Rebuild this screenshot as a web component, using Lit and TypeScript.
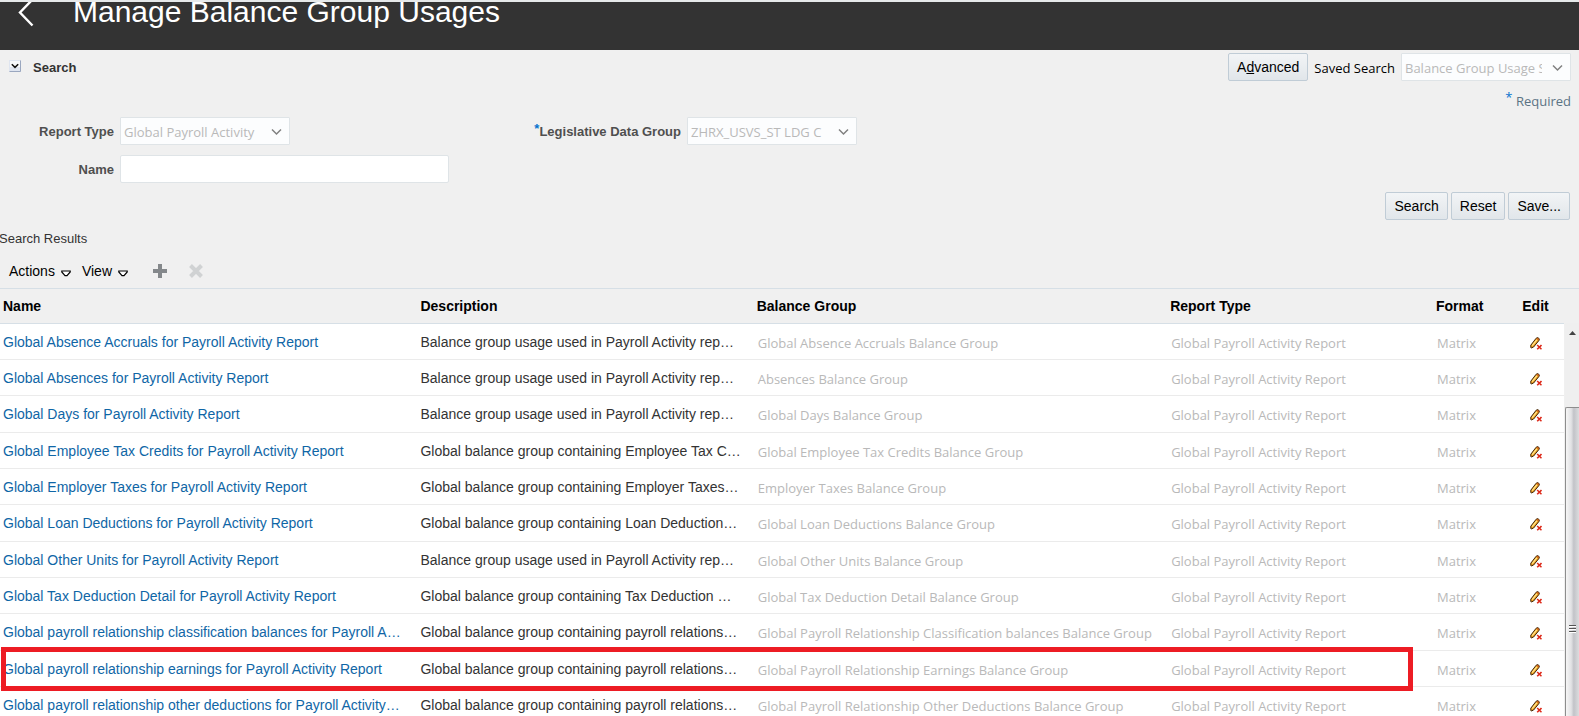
import { LitElement, html, css, svg, nothing } from "lit";
import { customElement, property } from "lit/decorators.js";

interface Usage {
  name: string;
  description: string;
  group: string;
  marked?: boolean;
}

const USAGES: Usage[] = [
  {
    name: "Global Absence Accruals for Payroll Activity Report",
    description: "Balance group usage used in Payroll Activity rep…",
    group: "Global Absence Accruals Balance Group",
  },
  {
    name: "Global Absences for Payroll Activity Report",
    description: "Balance group usage used in Payroll Activity rep…",
    group: "Absences Balance Group",
  },
  {
    name: "Global Days for Payroll Activity Report",
    description: "Balance group usage used in Payroll Activity rep…",
    group: "Global Days Balance Group",
  },
  {
    name: "Global Employee Tax Credits for Payroll Activity Report",
    description: "Global balance group containing Employee Tax C…",
    group: "Global Employee Tax Credits Balance Group",
  },
  {
    name: "Global Employer Taxes for Payroll Activity Report",
    description: "Global balance group containing Employer Taxes…",
    group: "Employer Taxes Balance Group",
  },
  {
    name: "Global Loan Deductions for Payroll Activity Report",
    description: "Global balance group containing Loan Deduction…",
    group: "Global Loan Deductions Balance Group",
  },
  {
    name: "Global Other Units for Payroll Activity Report",
    description: "Balance group usage used in Payroll Activity rep…",
    group: "Global Other Units Balance Group",
  },
  {
    name: "Global Tax Deduction Detail for Payroll Activity Report",
    description: "Global balance group containing Tax Deduction …",
    group: "Global Tax Deduction Detail Balance Group",
  },
  {
    name: "Global payroll relationship classification balances for Payroll A…",
    description: "Global balance group containing payroll relations…",
    group: "Global Payroll Relationship Classification balances Balance Group",
  },
  {
    name: "Global payroll relationship earnings for Payroll Activity Report",
    description: "Global balance group containing payroll relations…",
    group: "Global Payroll Relationship Earnings Balance Group",
    marked: true,
  },
  {
    name: "Global payroll relationship other deductions for Payroll Activity…",
    description: "Global balance group containing payroll relations…",
    group: "Global Payroll Relationship Other Deductions Balance Group",
  },
];

const pencil = html`<svg width="12" height="13" viewBox="0 0 12 13" aria-hidden="true">
  ${svg`
    <path d="M.8 10.6V8.2L6.2 1.2 7.6.5 9.3 1.8 9 3.4 3.6 10 1.6 10.9Z" fill="#f0a020" stroke="#3d2408" stroke-width="1"/>
    <path d="M2.2 8.6 6.8 2.8" stroke="#ffe890" stroke-width="1.2"/>
    <path d="M6.6 1.8 7.7.9 9 2 8.4 3.2Z" fill="#c8541c"/>
    <path d="m7.2 8 4.3 4.3m0-4.3-4.3 4.3" stroke="#dd2a1a" stroke-width="1.6"/>`}
</svg>`;

@customElement("choice-list")
export class ChoiceList extends LitElement {
  @property() label = "";
  @property() value = "";
  @property({ type: Boolean }) required = false;
  @property({ type: Boolean }) plain = false;

  static styles = css`
    :host {
      display: block;
    }
    .field {
      display: flex;
      align-items: center;
      gap: 6px;
    }
    .label {
      flex: 1;
      padding-top: 2px;
      text-align: right;
      white-space: nowrap;
      font: bold 13px/20px "Liberation Sans", Arial, sans-serif;
      color: #4f4f4f;
    }
    .label.plain {
      font: 13px/20px "Open Sans", "Noto Sans", sans-serif;
      color: #000;
    }
    .star {
      color: #0572ce;
      vertical-align: 3px;
      line-height: 1;
    }
    .box {
      display: grid;
      align-items: center;
      width: 170px;
    }
    .select,
    .chevron {
      grid-area: 1 / 1;
    }
    .select {
      appearance: none;
      box-sizing: border-box;
      width: 100%;
      height: 28px;
      margin: 0;
      padding: 2px 28px 0 3px;
      border: 1px solid #dfe4e7;
      border-radius: 1px;
      background: #fcfdfe;
      color: #b9b9b9;
      font: 13px/20px "Open Sans", "Noto Sans", sans-serif;
    }
    .chevron {
      justify-self: end;
      margin: 1px 8px 0 0;
      pointer-events: none;
    }
  `;

  render() {
    return html`<div class="field">
      <label class="label ${this.plain ? "plain" : ""}" for="choice"
        >${this.required ? html`<span class="star">*</span>` : nothing}${this.label}</label
      >
      <span class="box">
        <select class="select" id="choice">
          <option>${this.value}</option>
        </select>
        <svg class="chevron" width="11" height="8" viewBox="0 0 11 8" aria-hidden="true">
          <path d="M1 1.5 5.5 6 10 1.5" fill="none" stroke="#808080" stroke-width="1.5" />
        </svg>
      </span>
    </div>`;
  }
}

@customElement("app-root")
export class AppRoot extends LitElement {
  static styles = css`
    :host {
      display: flex;
      flex-direction: column;
      height: 100vh;
      overflow: hidden;
      background: #f0f0f0;
      color: #333;
      font: 14px/20px "Liberation Sans", Arial, sans-serif;
    }
    .banner {
      display: flex;
      flex: none;
      align-items: flex-start;
      gap: 39px;
      height: 48px;
      padding-left: 18px;
      border-top: 2px solid #e6e9ea;
      background: #333;
      color: #fff;
      overflow: hidden;
    }
    .back {
      display: flex;
      margin: 0;
      padding: 0;
      border: 0;
      background: none;
    }
    .title {
      margin: 0;
      font-size: 30px;
      font-weight: normal;
      line-height: 20px;
      white-space: nowrap;
    }
    .bar {
      display: flex;
      align-items: center;
      justify-content: space-between;
      padding: 3px 8px 0 9px;
    }
    .heading {
      display: flex;
      align-items: center;
      gap: 12px;
      margin: 0;
      padding-top: 2px;
      font-size: 13px;
    }
    .toggle {
      display: flex;
      margin: 0 0 4px;
      padding: 0;
      border: 0;
      background: none;
    }
    .group {
      display: flex;
      align-items: center;
      gap: 6px;
    }
    .button {
      box-sizing: border-box;
      height: 28px;
      margin: 0;
      padding: 0 8px;
      border: 1px solid #c0ccd6;
      border-radius: 2px;
      background: linear-gradient(#f2f4f6, #e1e6ea);
      color: #000;
      font: 14px/20px "Liberation Sans", Arial, sans-serif;
      white-space: nowrap;
    }
    .required {
      margin: 0;
      padding: 10px 8px 0;
      text-align: right;
      font: 13px/20px "Open Sans", "Noto Sans", sans-serif;
      color: #5b7384;
    }
    .star {
      color: #0572ce;
      vertical-align: 4px;
      line-height: 1;
    }
    .form {
      display: grid;
      grid-template-columns: 290px 567px;
      row-gap: 10px;
      padding-top: 6px;
    }
    .text-field {
      display: grid;
      grid-column: 1 / 3;
      grid-template-columns: 114px 329px;
      align-items: center;
      gap: 6px;
    }
    .text-label {
      padding-top: 2px;
      text-align: right;
      font-weight: bold;
      font-size: 13px;
      color: #4f4f4f;
    }
    .text-input {
      box-sizing: border-box;
      width: 329px;
      height: 28px;
      margin: 0;
      padding: 0 4px;
      border: 1px solid #dfe4e7;
      border-radius: 2px;
      background: #fff;
      font: 14px/20px "Liberation Sans", Arial, sans-serif;
    }
    .commands {
      display: flex;
      justify-content: flex-end;
      gap: 3px;
      padding: 9px 9px 0;
    }
    .results {
      margin: 0 0 0 -1px;
      padding-top: 9px;
      font-size: 13px;
      font-weight: normal;
    }
    .toolbar {
      display: flex;
      align-items: center;
      padding: 12px 9px 7px;
    }
    .menu,
    .tool {
      display: flex;
      align-items: center;
      margin: 0 11px 0 0;
      padding: 0;
      border: 0;
      background: none;
      color: #000;
      font: 14px/20px "Liberation Sans", Arial, sans-serif;
    }
    .menu {
      gap: 6px;
    }
    .menu svg {
      margin-top: 5px;
    }
    .tool {
      margin: 0 8px 0 14px;
    }
    .grid {
      display: flex;
      flex: 1;
      min-height: 0;
      border-top: 1px solid #d6dfe6;
      overflow: hidden;
    }
    .body {
      flex: 1;
      min-width: 0;
    }
    .table {
      width: 100%;
      table-layout: fixed;
      border-collapse: separate;
      border-spacing: 0;
    }
    .name-col {
      width: 26.5%;
    }
    .desc-col {
      width: 21.5%;
    }
    .type-col {
      width: 17%;
    }
    .format-col {
      width: 77px;
    }
    .edit-col {
      width: 57px;
    }
    .head {
      box-sizing: border-box;
      height: 35px;
      padding: 0 6px;
      border-bottom: 1px solid #d6dfe6;
      text-align: left;
      color: #000;
    }
    .head:last-child {
      text-align: center;
    }
    .head:first-child,
    .cell:first-child {
      padding-left: 3px;
    }
    .row {
      height: 36px;
    }
    .row.marked {
      position: relative;
    }
    .row:nth-child(3n) {
      height: 37px;
    }
    .cell {
      box-sizing: border-box;
      padding: 0 6px;
      border-bottom: 1px solid #ebebeb;
      background: #fff;
      overflow: hidden;
      text-overflow: ellipsis;
      white-space: nowrap;
    }
    .faint {
      padding: 2px 0 0 7px;
      color: #b9b9b9;
      font: 13px/20px "Open Sans", "Noto Sans", sans-serif;
    }
    .link {
      color: #0f66a6;
      text-decoration: none;
    }
    .edit {
      display: flex;
      margin: 3px auto 0;
      padding: 0;
      border: 0;
      background: none;
    }
    .marker {
      position: absolute;
      inset: -4px 151px -4px 1px;
      border: 5px solid #ed1c24;
      pointer-events: none;
    }
    .scroll {
      display: flex;
      flex: none;
      flex-direction: column;
      width: 14px;
      margin: 34px 0 0 1px;
      background: #efefef;
    }
    .arrow {
      display: flex;
      justify-content: center;
      height: 76px;
      padding-top: 8px;
    }
    .thumb {
      display: flex;
      flex: 1;
      align-items: center;
      justify-content: center;
      border: solid #8d8d8d;
      border-width: 1px 0 0 1px;
      border-radius: 2px 0 0 0;
      background: linear-gradient(90deg, #f6f6f6, #e2e2e4 40%, #c2c3c8 60%, #dcdcde);
    }
    .grip {
      padding-top: 134px;
    }
  `;

  private row(u: Usage) {
    return html`<tr class="row ${u.marked ? "marked" : ""}">
      <td class="cell"><a class="link" href="#">${u.name}</a></td>
      <td class="cell">${u.description}</td>
      <td class="cell faint">${u.group}</td>
      <td class="cell faint">Global Payroll Activity Report</td>
      <td class="cell faint">Matrix</td>
      <td class="cell">
        <button class="edit" aria-label="Edit">${pencil}</button>
        ${u.marked ? html`<div class="marker"></div>` : nothing}
      </td>
    </tr>`;
  }

  private menu(label: string) {
    return html`<button class="menu">
      ${label}
      <svg width="10" height="7" viewBox="0 0 10 7" aria-hidden="true">
        <path d="M.8 1h8.4v1L6 5.6H4L.8 2Z" fill="#fff" stroke="#000" stroke-width="1.2" />
      </svg>
    </button>`;
  }

  render() {
    return html`
      <header class="banner">
        <button class="back" aria-label="Back">
          <svg width="16" height="25" viewBox="0 0 16 25" aria-hidden="true">
            <path d="M14.5-2.5 2 10.5 14.5 23.5" fill="none" stroke="#fff" stroke-width="2.4" />
          </svg>
        </button>
        <h1 class="title">Manage Balance Group Usages</h1>
      </header>

      <div class="bar">
        <h2 class="heading">
          <button class="toggle" aria-label="Collapse search">
            <svg width="12" height="12" viewBox="0 0 12 12" aria-hidden="true">
              <path d="M0 0h12v12H0Z" fill="#dfe5f0" />
              <path d="M1 1h10v6H1Z" fill="#f7f9fc" />
              <path d="M.5 11.5h11V.5" fill="none" stroke="#9aa7bf" />
              <path d="M2.8 4.2 6 7.4 9.2 4.2" fill="none" stroke="#111" stroke-width="1.5" />
            </svg>
          </button>
          Search
        </h2>
        <div class="group">
          <button class="button">A<u>d</u>vanced</button>
          <choice-list plain label="Saved Search" value="Balance Group Usage Search"></choice-list>
        </div>
      </div>
      <p class="required"><span class="star">*</span> Required</p>

      <form class="form">
        <choice-list label="Report Type" value="Global Payroll Activity"></choice-list>
        <choice-list required label="Legislative Data Group" value="ZHRX_USVS_ST LDG C"></choice-list>
        <div class="text-field">
          <label class="text-label" for="name">Name</label>
          <input class="text-input" id="name" type="text" />
        </div>
      </form>
      <div class="commands">
        <button class="button">Search</button>
        <button class="button">Reset</button>
        <button class="button">Save...</button>
      </div>

      <h2 class="results">Search Results</h2>
      <div class="toolbar">
        ${this.menu("Actions")}${this.menu("View")}
        <button class="tool" aria-label="Add">
          <svg width="14" height="14" viewBox="0 0 14 14" aria-hidden="true">
            <path d="M7 0v14M0 7h14" stroke="#84888b" stroke-width="4" />
          </svg>
        </button>
        <button class="tool" aria-label="Delete">
          <svg width="14" height="14" viewBox="0 0 14 14" aria-hidden="true">
            <path d="m1.5 1.5 11 11m0-11-11 11" stroke="#d0d2d3" stroke-width="4" />
          </svg>
        </button>
      </div>

      <div class="grid">
        <div class="body">
          <table class="table">
            <colgroup>
              <col class="name-col" />
              <col class="desc-col" />
              <col />
              <col class="type-col" />
              <col class="format-col" />
              <col class="edit-col" />
            </colgroup>
            <thead>
              <tr>
                <th class="head">Name</th>
                <th class="head">Description</th>
                <th class="head">Balance Group</th>
                <th class="head">Report Type</th>
                <th class="head">Format</th>
                <th class="head">Edit</th>
              </tr>
            </thead>
            <tbody>
              ${USAGES.map((u) => this.row(u))}
            </tbody>
          </table>
        </div>
        <div class="scroll" aria-hidden="true">
          <div class="arrow">
            <svg width="7" height="4" viewBox="0 0 7 4"><path d="M0 4 3.5 0 7 4Z" fill="#444" /></svg>
          </div>
          <div class="thumb">
            <svg class="grip" width="7" height="9" viewBox="0 0 7 9">
              <path d="M0 .5h7M0 3.5h7M0 6.5h7" stroke="#555" />
              <path d="M0 1.5h7M0 4.5h7M0 7.5h7" stroke="#fff" />
            </svg>
          </div>
        </div>
      </div>
    `;
  }
}
